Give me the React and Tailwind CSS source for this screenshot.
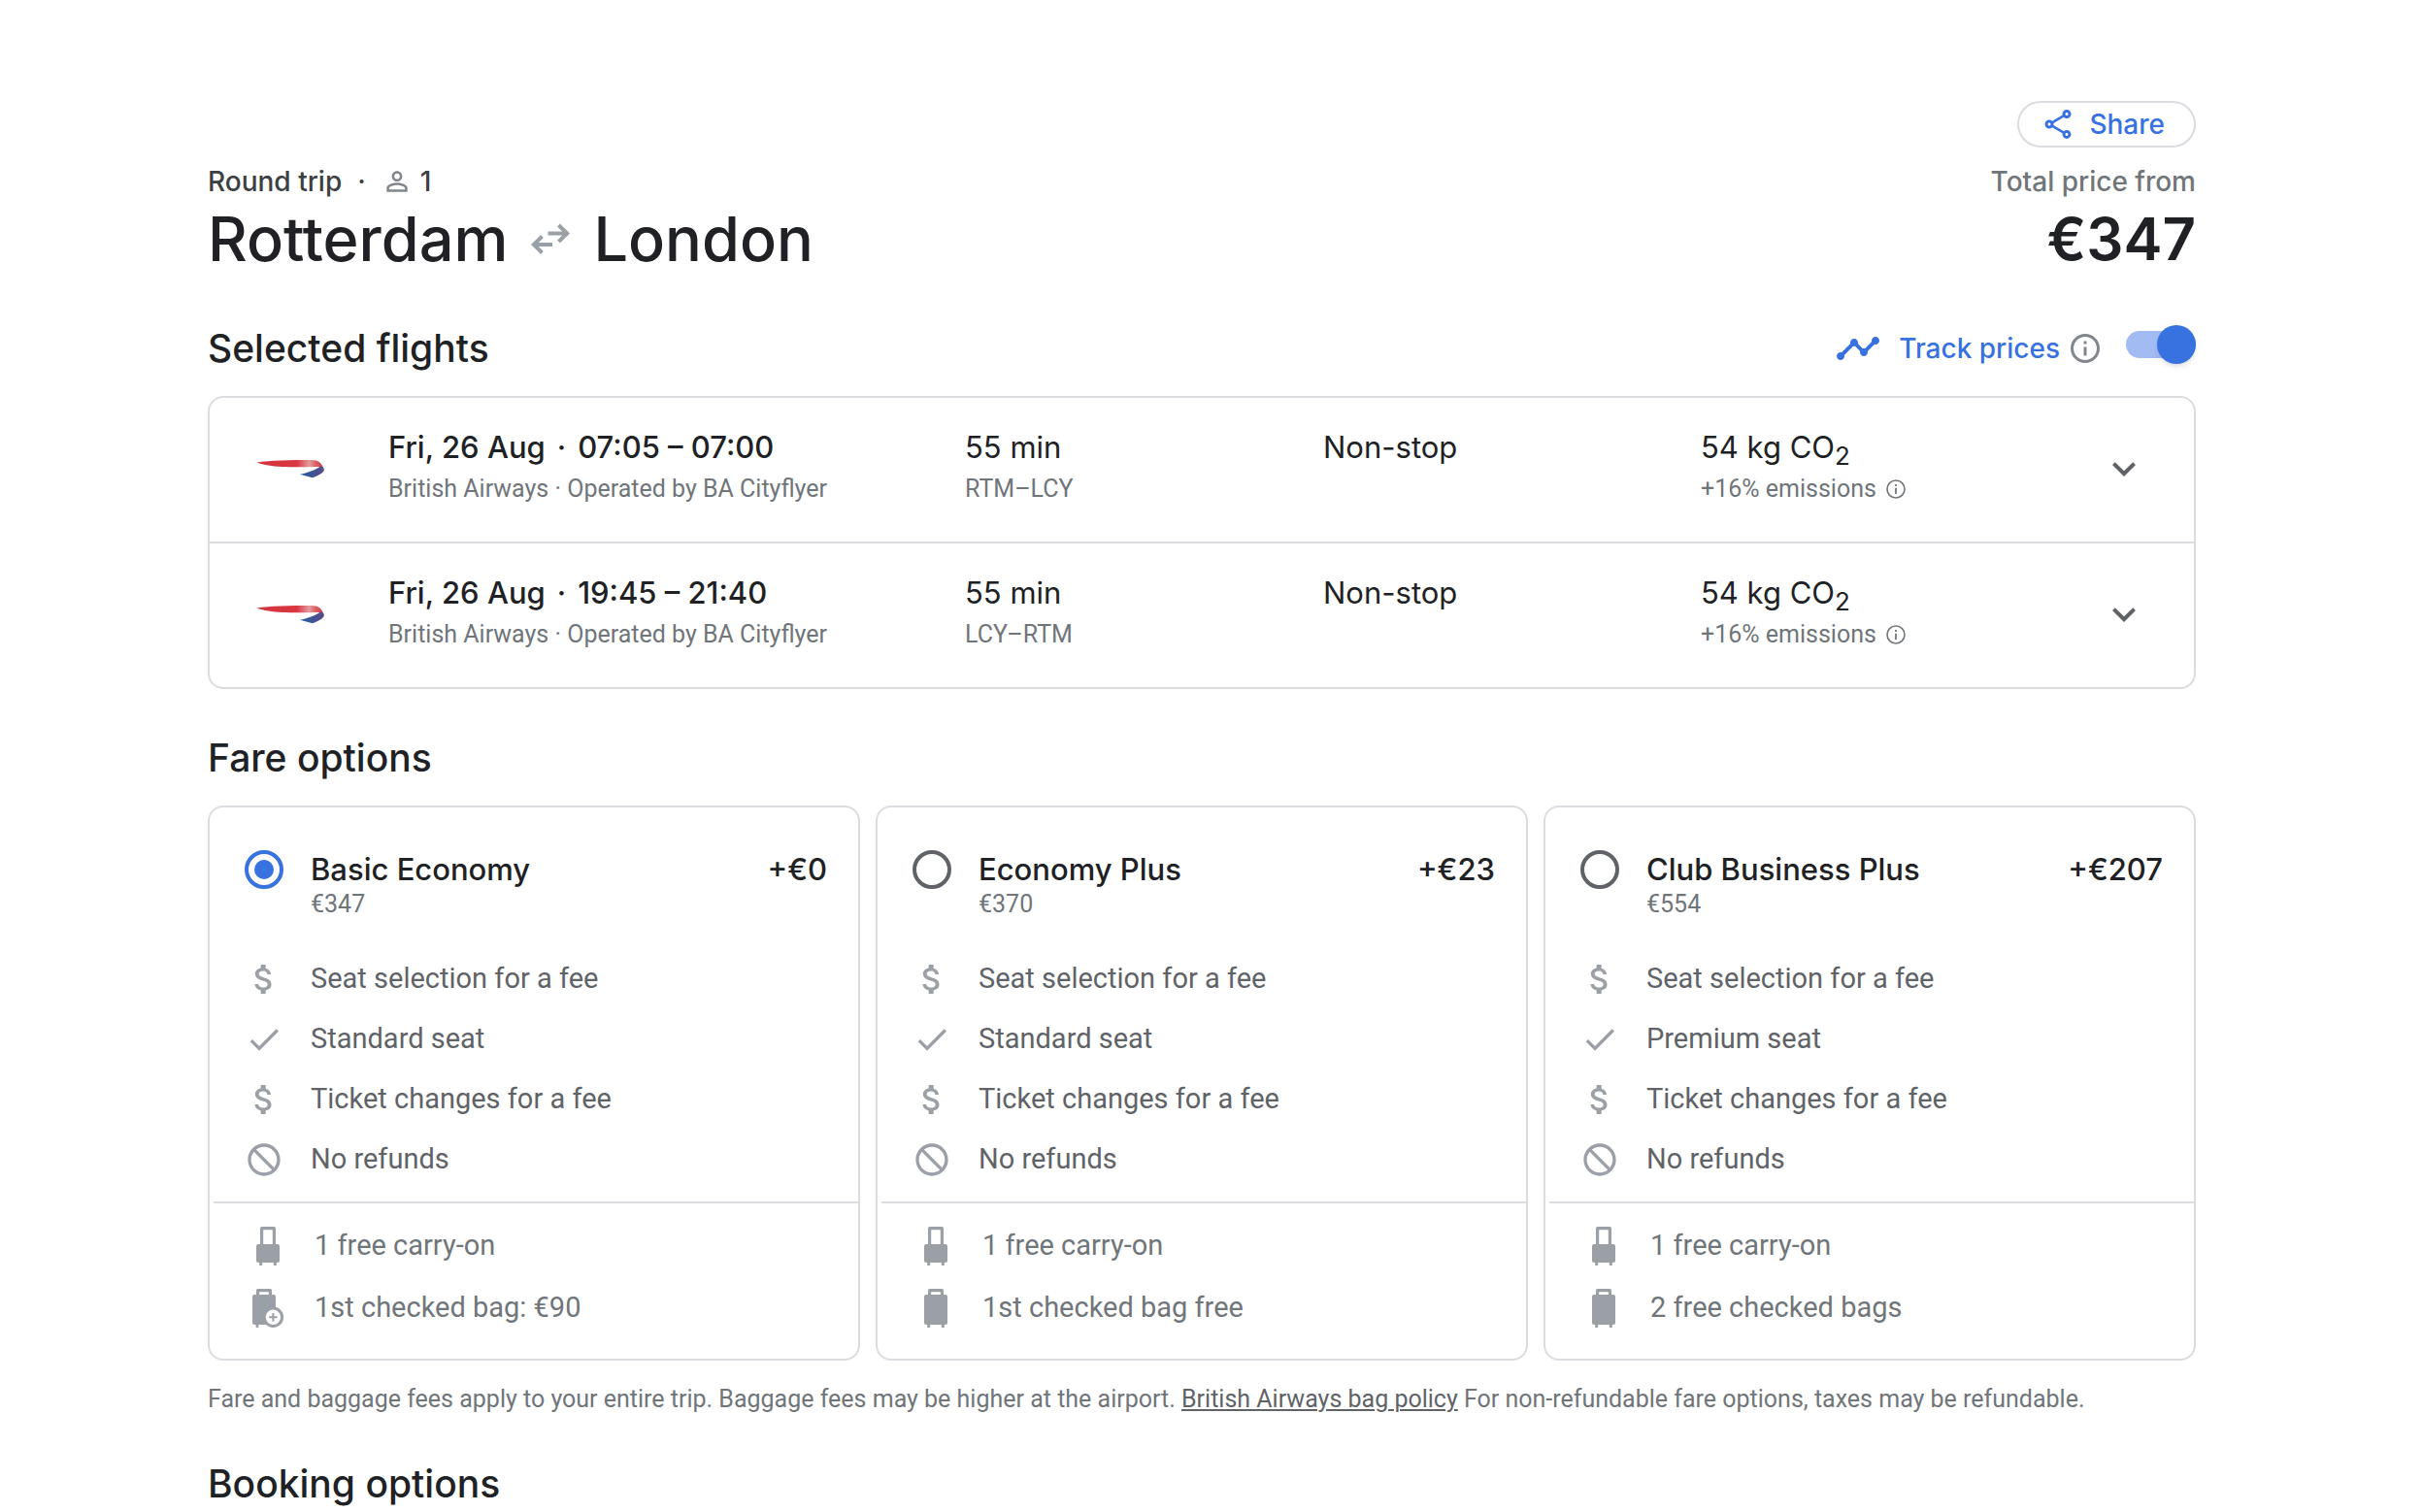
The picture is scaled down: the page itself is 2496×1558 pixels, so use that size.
import React, { useState } from "react";
import {
  MdAttachMoney,
  MdBlock,
  MdCheck,
  MdExpandMore,
  MdInfoOutline,
  MdPersonOutline,
  MdOutlineShare,
  MdTimeline,
} from "react-icons/md";

const flights = [
  { date: "Fri, 26 Aug", times: "07:05 – 07:00", route: "RTM–LCY" },
  { date: "Fri, 26 Aug", times: "19:45 – 21:40", route: "LCY–RTM" },
];

const fares = [
  { id: "basic", name: "Basic Economy", total: "€347", extra: "+€0", seat: "Standard seat", bag: "1st checked bag: €90", bagIcon: "paid" },
  { id: "plus", name: "Economy Plus", total: "€370", extra: "+€23", seat: "Standard seat", bag: "1st checked bag free", bagIcon: "free" },
  { id: "club", name: "Club Business Plus", total: "€554", extra: "+€207", seat: "Premium seat", bag: "2 free checked bags", bagIcon: "free" },
];

function SwapArrows() {
  return (
    <svg viewBox="0 0 40 32" className="h-8 w-10 text-[#9aa0a6]" fill="none" stroke="currentColor" strokeWidth="4" aria-hidden="true">
      <path d="M17.5 10.5H36" />
      <path d="M28.5 2l8.7 8.5-8.7 8.5" />
      <path d="M22 22H4" />
      <path d="M11.5 13.500L2.800 22l8.700 8.500" />
    </svg>
  );
}

function Ribbon() {
  return (
    <svg viewBox="0 0 70 20" className="h-5 w-[70px]" aria-label="British Airways" role="img">
      <defs>
        <linearGradient id="ribbonRed" x1="0" x2="1" y1="0" y2="0">
          <stop offset="0" stopColor="#d4333e" />
          <stop offset="0.6" stopColor="#d93843" />
          <stop offset="0.78" stopColor="#e59a9d" />
          <stop offset="0.88" stopColor="#dc6063" />
          <stop offset="1" stopColor="#c93a48" />
        </linearGradient>
        <linearGradient id="ribbonBlue" x1="0" x2="1" y1="0" y2="0">
          <stop offset="0" stopColor="#1f5fa8" />
          <stop offset="1" stopColor="#5b4a86" />
        </linearGradient>
      </defs>
      <path d="M0.500 3.400C14 1.600 34 1 57 1c7 0 10.500 3 12.700 9.500L65 8C50 8.300 36 8.300 27 8 16 7.500 8 6 0.500 3.400z" fill="url(#ribbonRed)" />
      <path d="M66 7.600c2.500.5 3.800 1.800 3.800 3.400 0 3-6 6.300-12 8.200L45 15.800C52 14.500 61 11.500 66 7.600z" fill="url(#ribbonBlue)" />
    </svg>
  );
}

function SmallInfo() {
  return (
    <svg viewBox="0 0 24 24" className="size-6" fill="none" aria-hidden="true">
      <circle cx="12" cy="12" r="9" stroke="currentColor" strokeWidth="1.600" />
      <path d="M12 10.800V17M12 7v2" stroke="currentColor" strokeWidth="1.800" />
    </svg>
  );
}

function CarryOn() {
  return (
    <svg viewBox="0 0 24 24" className="size-12 text-[#9aa0a6]" fill="currentColor" aria-hidden="true">
      <path d="M8.800 11V2.800h6.400V11" fill="none" stroke="currentColor" strokeWidth="1.600" strokeLinejoin="round" />
      <path d="M7 11h10a1 1 0 0 1 1 1v7.500a1 1 0 0 1-1 1h-.6V22h-1.500v-1.500H9.100V22H7.600v-1.500H7a1 1 0 0 1-1-1V12a1 1 0 0 1 1-1z" />
    </svg>
  );
}

function Suitcase() {
  return (
    <svg viewBox="0 0 24 24" className="size-12 text-[#9aa0a6]" fill="currentColor" aria-hidden="true">
      <path d="M8.800 6V2.800h6.400V6" fill="none" stroke="currentColor" strokeWidth="1.600" strokeLinejoin="round" />
      <path d="M7 5h10a1 1 0 0 1 1 1v13.500a1 1 0 0 1-1 1h-.6V22h-1.500v-1.500H9.100V22H7.600v-1.500H7a1 1 0 0 1-1-1V6a1 1 0 0 1 1-1z" />
    </svg>
  );
}

function SuitcasePlus() {
  return (
    <svg viewBox="0 0 24 24" className="size-12 text-[#9aa0a6]" fill="currentColor" aria-hidden="true">
      <path d="M6.800 6V2.800h6.400V6" fill="none" stroke="currentColor" strokeWidth="1.600" strokeLinejoin="round" />
      <path d="M5 5h10a1 1 0 0 1 1 1v14.500H7.200V22H5.800v-1.500H5a1 1 0 0 1-1-1V6a1 1 0 0 1 1-1z" />
      <circle cx="14.700" cy="16.600" r="4.600" fill="white" stroke="currentColor" strokeWidth="1.500" />
      <path d="M14.700 14.500v4.200M12.600 16.600h4.200" fill="none" stroke="currentColor" strokeWidth="1" />
    </svg>
  );
}

function NotAllowed({ className }) {
  return <MdBlock className={`${className} -scale-x-100`} aria-hidden="true" />;
}

function FlightRow({ flight }) {
  return (
    <li className="grid grid-cols-[184px_594fr_369fr_389fr_412fr_96px] border-b-2 border-[#dadce0] pt-7 pb-[34px] last:border-b-0">
      <div className="flex items-center pt-1 pl-12">
        <Ribbon />
      </div>
      <div>
        <h3 className="flex gap-3 text-[31px] leading-[46px] font-medium">
          <span>{flight.date}</span>
          <span>·</span>
          <span>{flight.times}</span>
        </h3>
        <p className="font-[Roboto,sans-serif] text-[25px] leading-10 text-[#70757a]">British Airways · Operated by BA Cityflyer</p>
      </div>
      <div>
        <p className="text-[31px] leading-[46px]">55 min</p>
        <p className="font-[Roboto,sans-serif] text-[25px] leading-10 text-[#70757a]">{flight.route}</p>
      </div>
      <p className="text-[31px] leading-[46px]">Non-stop</p>
      <div>
        <p className="text-[31px] leading-[46px]">
          54 kg CO<sub className="text-[26px]">2</sub>
        </p>
        <div className="flex items-center gap-2 font-[Roboto,sans-serif] text-[25px] leading-10 text-[#70757a]">
          <span>+16% emissions</span>
          <button type="button" aria-label="About emissions">
            <SmallInfo />
          </button>
        </div>
      </div>
      <div className="flex items-center pt-1">
        <button type="button" aria-label="Flight details">
          <MdExpandMore className="size-12 text-[#5f6368]" />
        </button>
      </div>
    </li>
  );
}

function Feature({ icon: Icon, children }) {
  return (
    <li className="flex h-[62px] items-center gap-7">
      <Icon className="size-10 text-[#9aa0a6]" aria-hidden="true" />
      <span>{children}</span>
    </li>
  );
}

function FareCard({ fare, checked, onSelect }) {
  return (
    <article className="rounded-2xl border-2 border-[#dadce0] pt-11 pb-5">
      <div className="flex items-start gap-7 pr-8 pl-9">
        <input
          id={fare.id}
          type="radio"
          name="fare"
          checked={checked}
          onChange={onSelect}
          className="grid size-10 shrink-0 appearance-none place-content-center rounded-full border-4 border-[#5f6368] before:size-5 before:rounded-full checked:border-[#3871e0] checked:before:bg-[#3871e0]"
        />
        <label htmlFor={fare.id} className="grow">
          <span className="block text-[31px] leading-10 font-medium">{fare.name}</span>
          <span className="block font-[Roboto,sans-serif] text-[25px] leading-8 text-[#70757a]">{fare.total}</span>
        </label>
        <span className="text-[31px] leading-10 font-medium">{fare.extra}</span>
      </div>
      <ul className="mt-[30px] pb-3 pl-9 font-[Roboto,sans-serif] text-[29px] text-[#5f6368]">
        <Feature icon={MdAttachMoney}>Seat selection for a fee</Feature>
        <Feature icon={MdCheck}>{fare.seat}</Feature>
        <Feature icon={MdAttachMoney}>Ticket changes for a fee</Feature>
        <Feature icon={NotAllowed}>No refunds</Feature>
      </ul>
      <ul className="ml-1 border-t-2 border-[#dadce0] pt-3 pl-8 font-[Roboto,sans-serif] text-[29px] text-[#70757a]">
        <li className="flex h-16 items-center gap-6">
          <CarryOn />
          <span>1 free carry-on</span>
        </li>
        <li className="flex h-16 items-center gap-6">
          {fare.bagIcon === "paid" ? <SuitcasePlus /> : <Suitcase />}
          <span>{fare.bag}</span>
        </li>
      </ul>
    </article>
  );
}

export default function App() {
  const [selected, setSelected] = useState("basic");
  const [tracking, setTracking] = useState(true);

  return (
    <div className="bg-white pr-5 font-[Inter,sans-serif] text-[#202124]">
      <main className="mx-auto max-w-[2048px] pt-[104px]">
        <div className="flex justify-end">
          <button type="button" className="flex h-12 items-center gap-3.5 rounded-full border-2 border-[#dadce0] pr-[30px] pl-[22px] text-[28px] font-medium text-[#3871e0]">
            <MdOutlineShare className="size-9" aria-hidden="true" />
            Share
          </button>
        </div>

        <header className="mt-4 flex justify-between">
          <div>
            <p className="flex items-center gap-4 text-[28px] leading-[38px] font-medium text-[#3c4043]">
              <span>Round trip</span>
              <span>·</span>
              <span className="flex items-center gap-2">
                <MdPersonOutline className="size-8 text-[#80868b]" aria-hidden="true" />
                1
              </span>
            </p>
            <h1 className="flex items-center gap-6 text-[63px] leading-20 font-medium">
              <span>Rotterdam</span>
              <SwapArrows />
              <span>London</span>
            </h1>
          </div>
          <div className="text-right">
            <p className="text-[28px] leading-[38px] font-medium text-[#70757a]">Total price from</p>
            <p className="text-[60px] leading-20 font-semibold">€347</p>
          </div>
        </header>

        <section className="mt-[50px]">
          <div className="mb-[26px] flex h-[46px] items-center justify-between">
            <h2 className="text-[39px] leading-[46px] font-medium">Selected flights</h2>
            <div className="flex items-center">
              <MdTimeline className="mr-[18px] size-12 text-[#3871e0]" aria-hidden="true" />
              <label htmlFor="track" className="mr-2 text-[28px] font-medium text-[#3871e0]">
                Track prices
              </label>
              <button type="button" aria-label="About price tracking" className="mr-6">
                <MdInfoOutline className="size-9 text-[#80868b]" />
              </button>
              <input
                id="track"
                type="checkbox"
                role="switch"
                checked={tracking}
                onChange={(e) => setTracking(e.target.checked)}
                className="mb-2 flex h-7 w-[72px] appearance-none items-center rounded-full bg-[#bdc1c6] before:size-10 before:shrink-0 before:rounded-full before:bg-white before:shadow-md checked:justify-end checked:bg-[#a2bbf3] checked:before:bg-[#3871e0]"
              />
            </div>
          </div>
          <ul className="rounded-2xl border-2 border-[#dadce0]">
            {flights.map((flight) => (
              <FlightRow key={flight.route} flight={flight} />
            ))}
          </ul>
        </section>

        <section className="mt-12">
          <h2 className="mb-[26px] text-[39px] leading-[46px] font-medium">Fare options</h2>
          <div className="grid grid-cols-3 gap-4">
            {fares.map((fare) => (
              <FareCard key={fare.id} fare={fare} checked={selected === fare.id} onSelect={() => setSelected(fare.id)} />
            ))}
          </div>
          <p className="mt-5 font-[Roboto,sans-serif] text-[25px] leading-10 text-[#70757a]">
            Fare and baggage fees apply to your entire trip. Baggage fees may be higher at the airport.{" "}
            <a href="#bag-policy" className="text-[#5f6368] underline decoration-2 underline-offset-2">
              British Airways bag policy
            </a>{" "}
            For non-refundable fare options, taxes may be refundable.
          </p>
        </section>

        <section className="mt-11">
          <h2 className="text-[39px] leading-[46px] font-medium">Booking options</h2>
        </section>
      </main>
    </div>
  );
}
